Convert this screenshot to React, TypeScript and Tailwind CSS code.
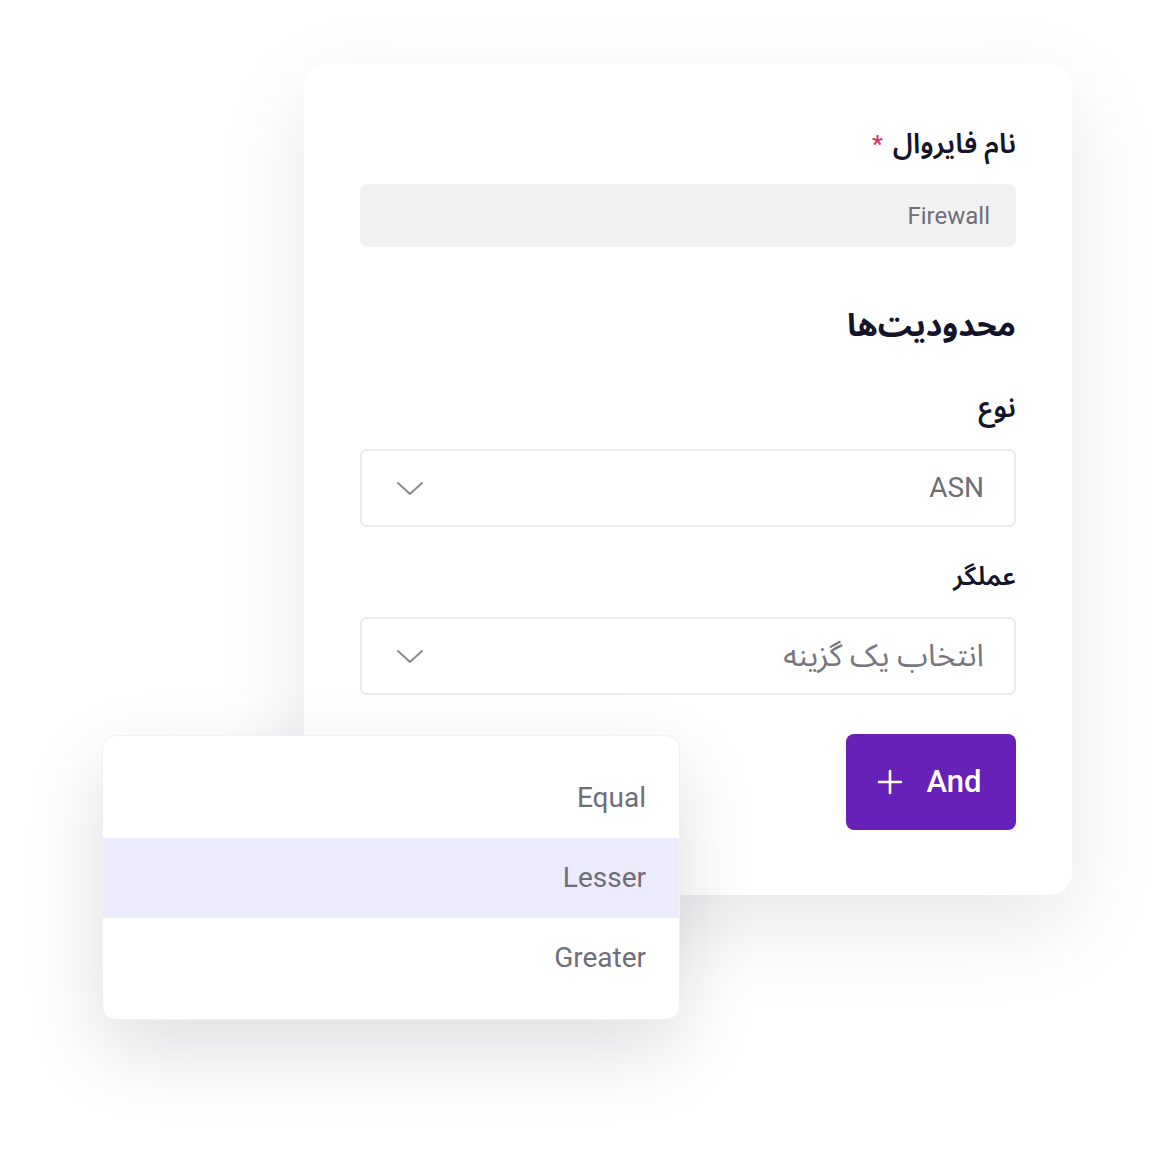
import React from "react";

const font = { fontFamily: "Roboto, 'Noto Sans Arabic', 'Vazirmatn', 'DejaVu Sans', sans-serif" };

function Chevron() {
  return (
    <svg width="28" height="16" viewBox="0 0 28 16" fill="none">
      <path d="M2 3 L14 14 L26 3" stroke="#8c8c8c" strokeWidth="2" strokeLinecap="round" strokeLinejoin="round" />
    </svg>
  );
}

function Plus() {
  return (
    <svg width="26" height="26" viewBox="0 0 26 26" fill="none">
      <path d="M13 2 V24 M2 13 H24" stroke="white" strokeWidth="2.6" strokeLinecap="round" />
    </svg>
  );
}

export default function App() {
  return (
    <div className="relative w-[1172px] h-[1158px] bg-white overflow-hidden" style={font}>
      <div className="pt-[64px] pl-[304px]">
        <div
          dir="rtl"
          className="w-[768px] h-[831px] bg-white rounded-[22px] shadow-[0_30px_90px_rgba(20,20,40,0.10)] px-[56px] pt-[62px] flex flex-col"
        >
          <div className="text-[28px] leading-[36px] font-semibold text-[#14142b] flex items-center gap-[10px]">
            <span>نام فایروال</span>
            <span className="text-[#d6336c] text-[24px]">*</span>
          </div>
          <div className="mt-[22px] h-[63px] rounded-[8px] bg-[#f2f2f3] flex items-center px-[26px]">
            <span dir="ltr" className="text-[24px] text-[#6e6e78]">Firewall</span>
          </div>
          <div className="mt-[56px] text-[32px] leading-[44px] font-bold text-[#14142b]">محدودیت‌ها</div>
          <div className="mt-[43px] text-[28px] leading-[36px] font-semibold text-[#14142b]">نوع</div>
          <div className="mt-[23px] h-[78px] rounded-[6px] border-2 border-[#ebebeb] flex items-center justify-between pr-[30px] pl-[34px]">
            <span dir="ltr" className="text-[28px] text-[#6e6e78]">ASN</span>
            <Chevron />
          </div>
          <div className="mt-[31px] text-[26px] leading-[36px] font-semibold text-[#14142b]">عملگر</div>
          <div className="mt-[23px] h-[78px] rounded-[6px] border-2 border-[#ebebeb] flex items-center justify-between pr-[30px] pl-[34px]">
            <span className="text-[31px] text-[#76767f]">انتخاب یک گزینه</span>
            <Chevron />
          </div>
          <div className="mt-[39px] flex">
            <button className="w-[170px] h-[96px] ml-[1px] rounded-[8px] bg-[#6720b8] flex items-center justify-center text-white">
              <span dir="ltr" className="flex items-center gap-[24px] pr-[4px]">
                <Plus />
                <span className="text-[31px] font-medium">And</span>
              </span>
            </button>
          </div>
        </div>
      </div>

      <div className="absolute left-[102px] top-[735px] w-[578px] h-[285px] bg-white rounded-[14px] border border-[#f1f1f4] shadow-[0_30px_80px_rgba(20,20,40,0.14)] py-[22px] overflow-hidden">
        <div className="h-[80px] flex items-center justify-end pr-[33px] text-[28px] text-[#6e6e78]">Equal</div>
        <div className="h-[80px] flex items-center justify-end pr-[33px] text-[28px] text-[#6e6e78] bg-[#ecebfb]">Lesser</div>
        <div className="h-[80px] flex items-center justify-end pr-[33px] text-[28px] text-[#6e6e78]">Greater</div>
      </div>
    </div>
  );
}
